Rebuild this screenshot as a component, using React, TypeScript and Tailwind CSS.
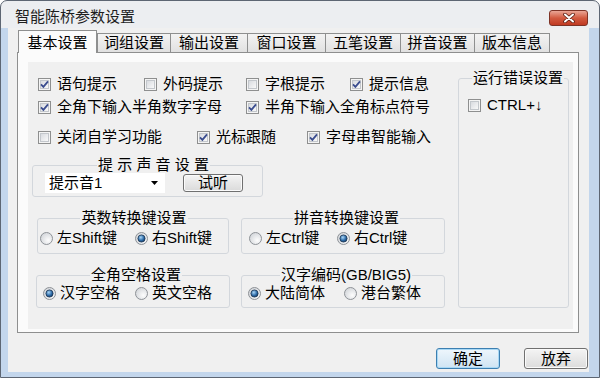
import type { ReactNode } from "react";

const tabs = [
  { label: "基本设置", w: "w-[79px]", active: true },
  { label: "词组设置", w: "w-[74px]" },
  { label: "输出设置", w: "w-[78px]" },
  { label: "窗口设置", w: "w-[79px]" },
  { label: "五笔设置", w: "w-[76px]" },
  { label: "拼音设置", w: "w-[75px]" },
  { label: "版本信息", w: "w-[76px]" },
];

function CheckBox({ checked }: { checked?: boolean }) {
  return (
    <svg width="13" height="13" viewBox="0 0 13 13" className="shrink-0">
      <defs>
        <linearGradient id="cbfill" x1="0" y1="0" x2="1" y2="1">
          <stop offset="0" stopColor="#d6d9de" />
          <stop offset="1" stopColor="#fbfbfb" />
        </linearGradient>
      </defs>
      <rect x="0.5" y="0.5" width="12" height="12" fill="#f4f4f4" stroke="#8e8f8f" />
      <rect x="2.5" y="2.5" width="8" height="8" fill="url(#cbfill)" stroke="#c3c7cc" />
      {checked ? (
        <path d="M3 6.3 L5.4 8.8 L10 3.4" fill="none" stroke="#3b4d8f" strokeWidth="1.8" />
      ) : null}
    </svg>
  );
}

function Radio({ checked }: { checked?: boolean }) {
  return (
    <svg width="13" height="13" viewBox="0 0 13 13" className="shrink-0">
      <defs>
        <radialGradient id="rdfill" cx="0.65" cy="0.65" r="0.7">
          <stop offset="0" stopColor="#fdfdfd" />
          <stop offset="1" stopColor="#d3d6da" />
        </radialGradient>
        <radialGradient id="rddot" cx="0.4" cy="0.35" r="0.7">
          <stop offset="0" stopColor="#a9d6f7" />
          <stop offset="0.6" stopColor="#2f6ca8" />
          <stop offset="1" stopColor="#123a66" />
        </radialGradient>
      </defs>
      <circle cx="6.5" cy="6.5" r="6" fill="url(#rdfill)" stroke="#8e9297" />
      {checked ? <circle cx="6.5" cy="6.5" r="3.6" fill="url(#rddot)" stroke="#1c3550" strokeWidth="0.8" /> : null}
    </svg>
  );
}

function CheckItem({ label, checked, className }: { label: string; checked?: boolean; className?: string }) {
  return (
    <div className={`flex h-[20px] items-center gap-[6px] ${className ?? ""}`}>
      <CheckBox checked={checked} />
      <span>{label}</span>
    </div>
  );
}

function RadioItem({ label, checked, className }: { label: string; checked?: boolean; className?: string }) {
  return (
    <div className={`flex h-[20px] items-center gap-[4px] ${className ?? ""}`}>
      <Radio checked={checked} />
      <span>{label}</span>
    </div>
  );
}

function Group({ title, className, children }: { title: string; className?: string; children: ReactNode }) {
  return (
    <fieldset className={`rounded-[3px] border border-[#d3d7dc] ${className ?? ""}`}>
      <legend className="mx-auto px-[1px] leading-[16px]">{title}</legend>
      {children}
    </fieldset>
  );
}

function Button({ label, focused }: { label: string; focused?: boolean }) {
  return (
    <button
      className={
        focused
          ? "flex h-[21px] w-[64px] items-center justify-center rounded-[3px] border border-[#3c7fb1] bg-linear-to-b from-[#eef6fc] to-[#cfe4f3] shadow-[inset_0_0_0_1px_#a8d8f5]"
          : "flex h-[21px] w-[64px] items-center justify-center rounded-[3px] border border-[#707070] bg-linear-to-b from-[#f4f4f4] to-[#dcdcdc] shadow-[inset_0_0_0_1px_#fafafa]"
      }
    >
      {label}
    </button>
  );
}

export default function App() {
  return (
    <div className="flex h-[378px] w-[600px] flex-col overflow-hidden rounded-t-[7px] border border-[#5d6673] bg-[#eceef1] text-[15px] leading-[20px] text-black [font-family:'Liberation_Sans','Noto_Sans_CJK_SC',sans-serif]">
      {/* title bar */}
      <div className="flex h-[27px] shrink-0 items-start justify-between pl-[14px] pr-[11px] pt-[6px]">
        <span className="text-[#1e1e1e]">智能陈桥参数设置</span>
        <div className="mt-[3px] flex h-[16px] w-[39px] items-center justify-center rounded-[3px] border border-[#7e3326] bg-linear-to-b from-[#e9a595] via-[#d25a40] to-[#c03a22]">
          <svg width="14" height="10" viewBox="0 0 14 10">
            <path d="M3 1.5 L11 8.5 M11 1.5 L3 8.5" stroke="#5a1d12" strokeWidth="3.6" strokeLinecap="round" />
            <path d="M3 1.5 L11 8.5 M11 1.5 L3 8.5" stroke="#ffffff" strokeWidth="2" strokeLinecap="round" />
          </svg>
        </div>
      </div>

      {/* body */}
      <div className="flex flex-1 flex-col border-b-[5px] border-l-[7px] border-r-[10px] border-[#c3d6ec] bg-[#f0f0f0] pl-[9px] pt-[2px]">
        {/* tabs */}
        <div className="flex items-end pl-[1px]">
          {tabs.map((t, i) =>
            t.active ? (
              <div
                key={t.label}
                className={`relative z-10 -mb-px flex h-[23px] items-start justify-center border border-b-0 border-[#8e8f8f] bg-[#fbfbfb] pt-[2px] ${t.w}`}
              >
                {t.label}
              </div>
            ) : (
              <div
                key={t.label}
                className={`flex h-[19px] items-center justify-center border border-b-0 border-[#8e8f8f] bg-linear-to-b from-[#f3f3f3] to-[#e1e1e1] ${i > 1 ? "-ml-px" : ""} ${t.w}`}
              >
                {t.label}
              </div>
            )
          )}
        </div>

        {/* tab panel */}
        <div className="flex h-[281px] w-[562px] border border-[#8e8f8f] bg-[#fbfbfb] pb-[3px] pl-[10px] pr-[5px] pt-[9px]">
          <div className="flex flex-1 bg-[#f0f0f0]">
            {/* left column */}
            <div className="flex w-[430px] flex-col pt-[12px]">
              <div className="flex pl-[10px]">
                <CheckItem label="语句提示" checked className="w-[106px]" />
                <CheckItem label="外码提示" className="w-[102px]" />
                <CheckItem label="字根提示" className="w-[104px]" />
                <CheckItem label="提示信息" checked />
              </div>
              <div className="mt-[3px] flex pl-[10px]">
                <CheckItem label="全角下输入半角数字字母" checked className="w-[208px]" />
                <CheckItem label="半角下输入全角标点符号" checked />
              </div>
              <div className="mt-[10px] flex pl-[10px]">
                <CheckItem label="关闭自学习功能" className="w-[159px]" />
                <CheckItem label="光标跟随" checked className="w-[110px]" />
                <CheckItem label="字母串智能输入" checked />
              </div>

              <Group title="提 示 声 音 设 置" className="ml-[4px] mt-[10px] w-[231px] pb-[3px] pl-[12px]">
                <div className="flex items-center">
                  <div className="flex h-[20px] w-[120px] items-center justify-between bg-white pl-[4px] pr-[7px]">
                    <span>提示音1</span>
                    <svg width="7" height="4" viewBox="0 0 7 4">
                      <path d="M0 0 H7 L3.5 4 Z" fill="#000" />
                    </svg>
                  </div>
                  <div className="ml-[18px] flex h-[18px] w-[60px] items-center justify-center rounded-[3px] border border-[#707070] bg-linear-to-b from-[#f4f4f4] to-[#dadada] shadow-[inset_0_0_0_1px_#fbfbfb]">
                    试听
                  </div>
                </div>
              </Group>

              <div className="mt-[13px] flex">
                <Group title="英数转换键设置" className="ml-[9px] w-[192px] pb-[5px] pl-[2px] pt-[2px]">
                  <div className="flex">
                    <RadioItem label="左Shift键" className="w-[95px]" />
                    <RadioItem label="右Shift键" checked />
                  </div>
                </Group>
                <Group title="拼音转换键设置" className="ml-[12px] w-[204px] pb-[5px] pl-[7px] pt-[2px]">
                  <div className="flex">
                    <RadioItem label="左Ctrl键" className="w-[88px]" />
                    <RadioItem label="右Ctrl键" checked />
                  </div>
                </Group>
              </div>

              <div className="mt-[13px] flex">
                <Group title="全角空格设置" className="ml-[8px] w-[194px] pb-[4px] pl-[6px]">
                  <div className="flex">
                    <RadioItem label="汉字空格" checked className="w-[92px]" />
                    <RadioItem label="英文空格" />
                  </div>
                </Group>
                <Group title="汉字编码(GB/BIG5)" className="ml-[11px] w-[204px] pb-[4px] pl-[6px]">
                  <div className="flex">
                    <RadioItem label="大陆简体" checked className="w-[96px]" />
                    <RadioItem label="港台繁体" />
                  </div>
                </Group>
              </div>
            </div>

            {/* right column */}
            <Group title="运行错误设置" className="mt-[8px] h-[238px] w-[111px] pl-[9px]">
              <CheckItem label="CTRL+↓" className="mt-[9px]" />
            </Group>
          </div>
        </div>

        {/* buttons */}
        <div className="mt-[15px] flex justify-end gap-[24px] pr-[1px]">
          <Button label="确定" focused />
          <Button label="放弃" />
        </div>
      </div>
    </div>
  );
}
